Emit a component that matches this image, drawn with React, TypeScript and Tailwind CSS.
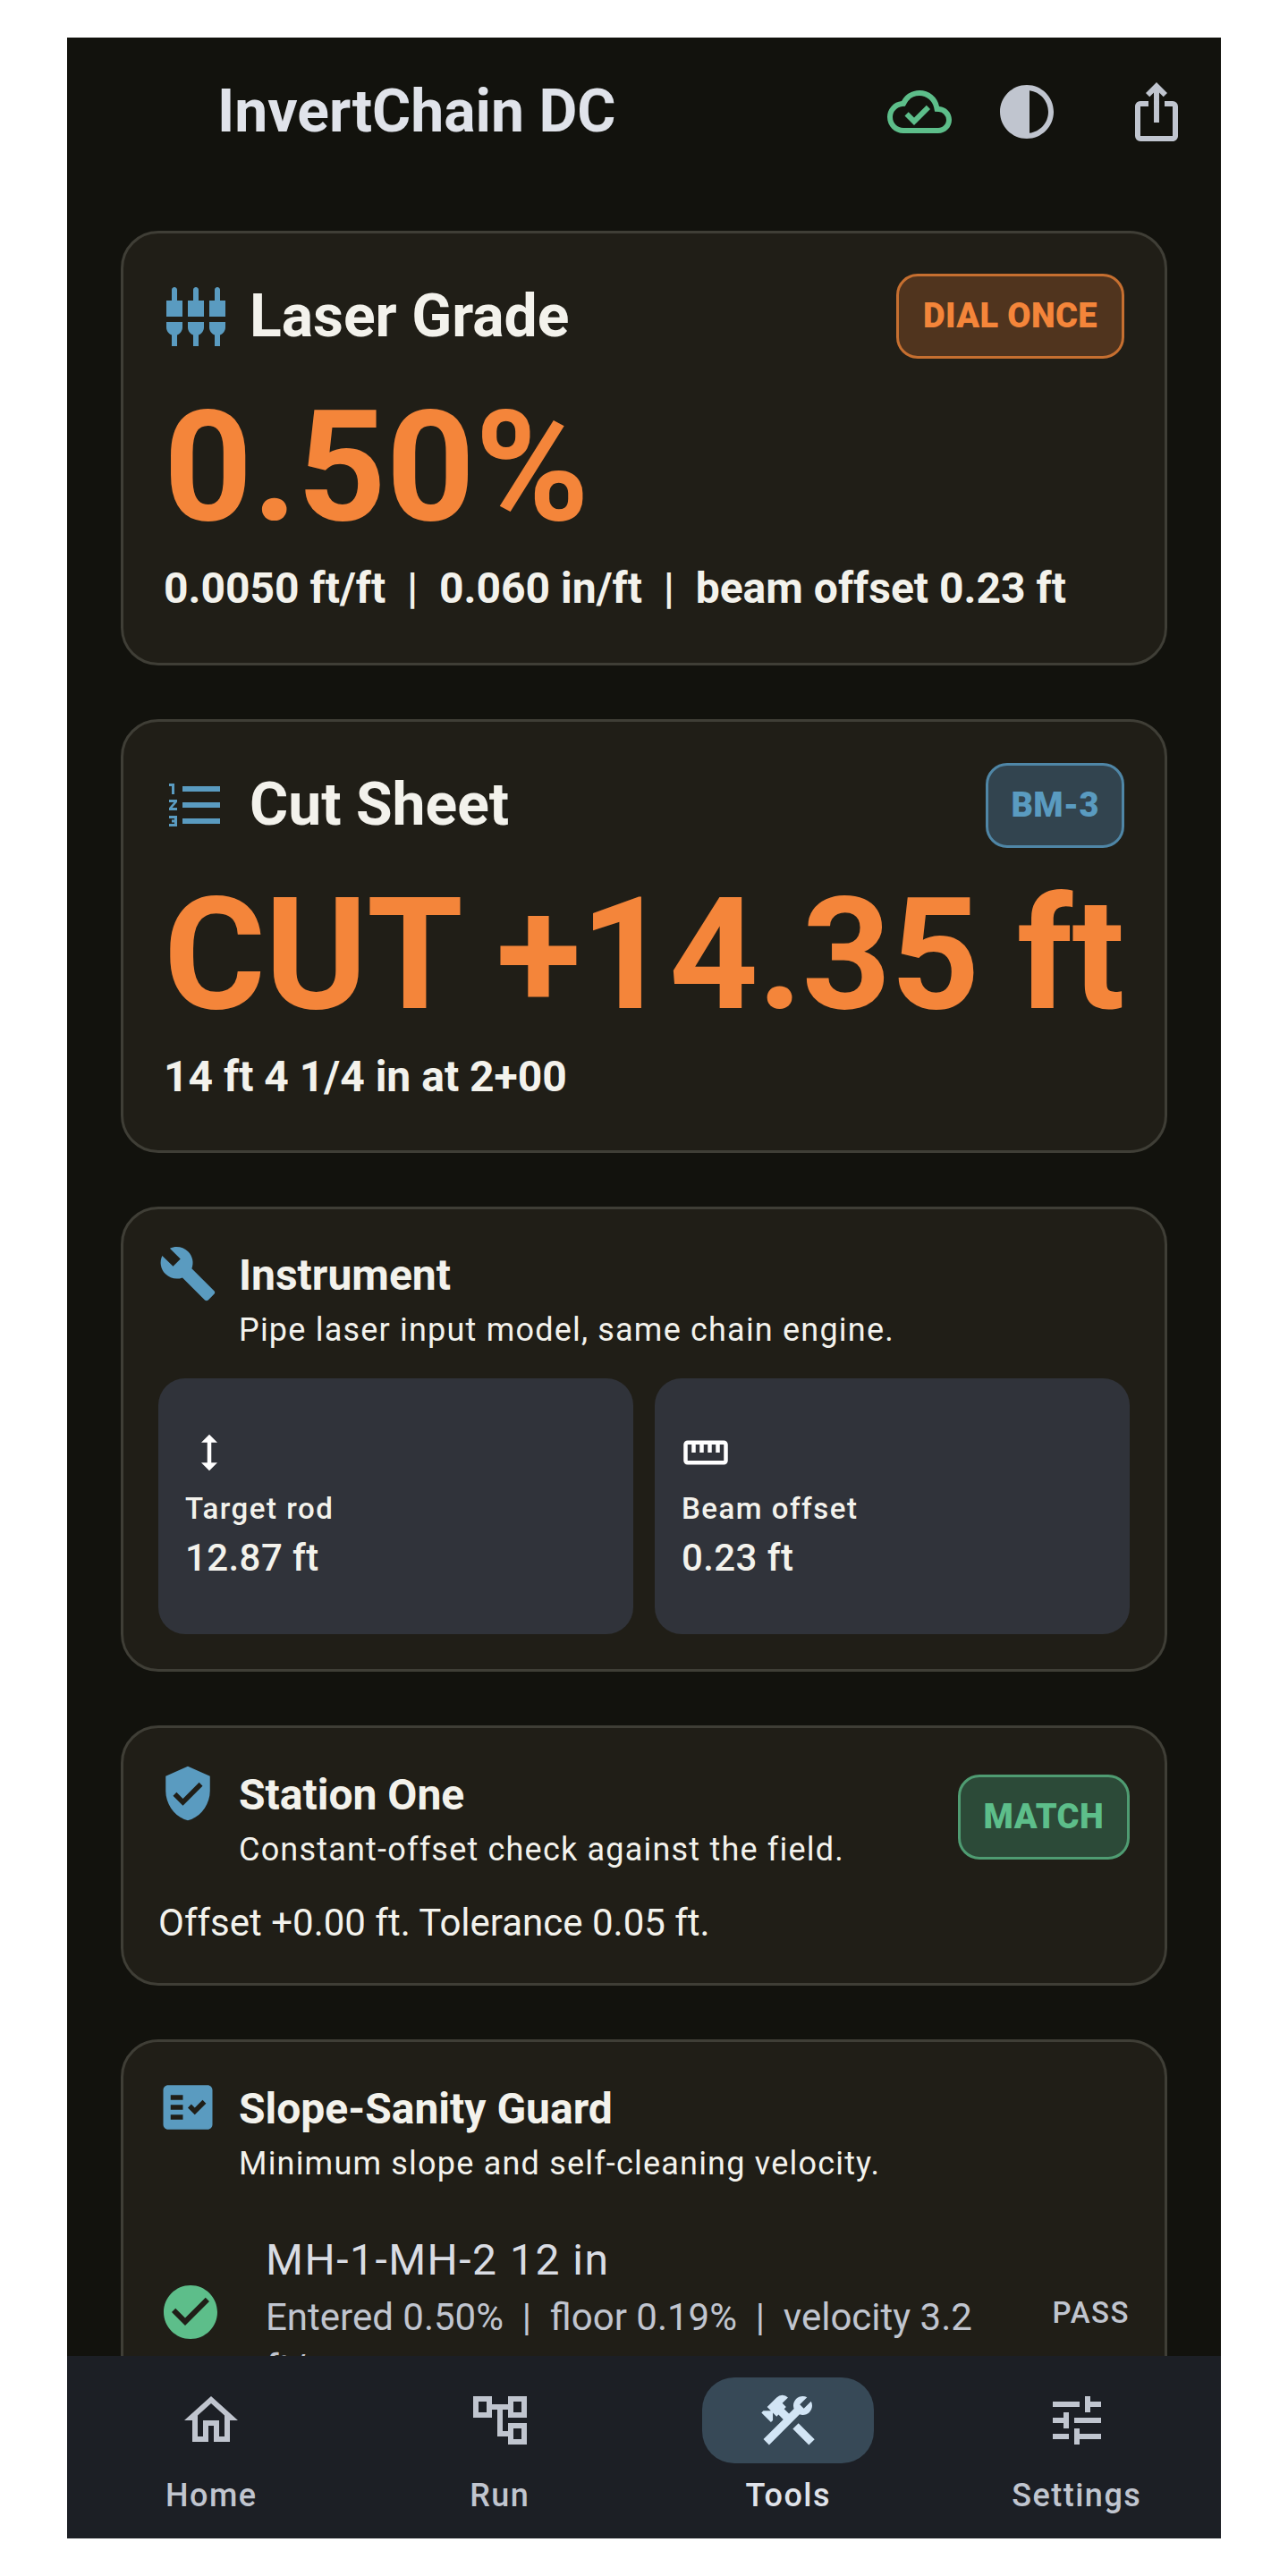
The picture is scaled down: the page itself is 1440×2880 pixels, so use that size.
import React from "react";
import {
  MdOutlineCloudDone, MdContrast, MdIosShare, MdSettingsInputComponent, MdFormatListNumbered,
  MdBuild, MdHeight, MdStraighten, MdVerifiedUser, MdFactCheck, MdCheckCircle, MdOutlineHome,
  MdOutlineAccountTree, MdConstruction, MdTune,
} from "react-icons/md";

const cardClass = "bg-[#201e17] border-[3px] border-[#3f3e36] rounded-[42px] w-full";

function SectionHead({ icon, title, sub }: { icon: React.ReactNode; title: string; sub: string }) {
  return (
    <div className="flex gap-[24px] flex-1">
      <div className="w-[66px] h-[66px] -mt-[5px] shrink-0 text-[#5a9bc0]">{icon}</div>
      <div>
        <div className="text-[48px] leading-[60px] font-bold text-[#f3f2ec]">{title}</div>
        <div className="mt-[7px] text-[36px] leading-[48px] tracking-[1.2px] text-[#f3f2ec]">{sub}</div>
      </div>
    </div>
  );
}

function Tile({ icon, label, value }: { icon: React.ReactNode; label: string; value: string }) {
  return (
    <div className="bg-[#30333a] rounded-[30px] h-[286px] pl-[30px] pt-[56px]">
      <div className="w-[54px] h-[54px] text-white">{icon}</div>
      <div className="mt-[12px] text-[33px] leading-[48px] font-medium tracking-[1.5px] text-[#f3f2ec]">{label}</div>
      <div className="mt-[4px] text-[42px] leading-[54px] font-medium tracking-[0.4px] text-[#f3f2ec]">{value}</div>
    </div>
  );
}

function NavItem({ icon, label, active }: { icon: React.ReactNode; label: string; active?: boolean }) {
  return (
    <div className="flex flex-col items-center pt-[24px]">
      <div className={`w-[192px] h-[96px] rounded-[36px] flex items-center justify-center ${active ? "bg-[#374957] text-[#d2e5f5]" : "text-[#c0c5cf]"}`}>
        <div className="w-[72px] h-[72px]">{icon}</div>
      </div>
      <div className={`mt-[12px] text-[36px] leading-[48px] font-medium tracking-[1.5px] ${active ? "text-[#e0e3ea]" : "text-[#c0c5cf]"}`}>{label}</div>
    </div>
  );
}

const badgeClass = "h-[95px] rounded-[24px] border-[3px] flex items-center text-[38px] font-black tracking-[0.4px]";

export default function App() {
  return (
    <div className="bg-white min-h-screen pt-[42px] font-['Roboto',sans-serif]">
      <div className="w-[1290px] h-[2796px] mx-auto bg-[#12120d] flex flex-col overflow-hidden">
        <header className="h-[162px] shrink-0 flex items-center pl-[168px] pr-[36px] pt-[4px]">
          <h1 className="text-[66px] leading-[84px] font-bold text-[#e0e3ea] flex-1">InvertChain DC</h1>
          <MdOutlineCloudDone className="w-[72px] h-[72px] text-[#5dbe8a]" />
          <MdContrast className="w-[72px] h-[72px] text-[#c0c5cf] ml-[48px]" />
          <MdIosShare className="w-[72px] h-[72px] text-[#c0c5cf] ml-[73px]" />
        </header>

        <main className="flex-1 min-h-0 overflow-hidden px-[60px] pt-[54px] flex flex-col gap-[60px]">
          <section className={`${cardClass} px-[45px] pt-[45px] pb-[50px] shrink-0`}>
            <div className="flex items-center justify-between h-[95px]">
              <div className="flex items-center gap-[24px]">
                <MdSettingsInputComponent className="w-[72px] h-[72px] text-[#5a9bc0]" />
                <div className="text-[66px] leading-[84px] font-bold text-[#f3f2ec]">Laser Grade</div>
              </div>
              <div className={`${badgeClass} px-[27px] border-[#c66f30] bg-[#50341e] text-[#f4853a]`}>DIAL ONCE</div>
            </div>
            <div className="mt-[31px] text-[173px] leading-[180px] font-bold text-[#f4853a]">0.50%</div>
            <div className="mt-[13px] text-[48px] leading-[66px] font-bold text-[#f3f2ec] whitespace-pre">0.0050 ft/ft  |  0.060 in/ft  |  beam offset 0.23 ft</div>
          </section>

          <section className={`${cardClass} px-[45px] pt-[45px] pb-[49px] shrink-0`}>
            <div className="flex items-center justify-between h-[96px]">
              <div className="flex items-center gap-[24px]">
                <MdFormatListNumbered className="w-[72px] h-[72px] text-[#5a9bc0]" />
                <div className="text-[66px] leading-[84px] font-bold text-[#f3f2ec]">Cut Sheet</div>
              </div>
              <div className={`${badgeClass} px-[25px] border-[#4f86a6] bg-[#32444f] text-[#5a9bc0]`}>BM-3</div>
            </div>
            <div className="mt-[33px] text-[174px] leading-[174px] font-bold tracking-[-0.8px] text-[#f4853a] whitespace-nowrap">CUT +14.35 ft</div>
            <div className="mt-[16px] text-[48px] leading-[66px] font-bold text-[#f3f2ec]">14 ft 4 1/4 in at 2+00</div>
          </section>

          <section className={`${cardClass} px-[39px] pt-[44px] pb-[39px] shrink-0`}>
            <SectionHead icon={<MdBuild className="w-full h-full" />} title="Instrument" sub="Pipe laser input model, same chain engine." />
            <div className="mt-[30px] grid grid-cols-2 gap-[24px]">
              <Tile icon={<MdHeight className="w-full h-full" />} label="Target rod" value="12.87 ft" />
              <Tile icon={<MdStraighten className="w-full h-full" />} label="Beam offset" value="0.23 ft" />
            </div>
          </section>

          <section className={`${cardClass} px-[39px] pt-[45px] pb-[39px] shrink-0`}>
            <div className="flex items-start">
              <SectionHead icon={<MdVerifiedUser className="w-full h-full" />} title="Station One" sub="Constant-offset check against the field." />
              <div className={`${badgeClass} px-[26px] mt-[7px] border-[#4f9c72] bg-[#2c4a38] text-[#5dbe8a]`}>MATCH</div>
            </div>
            <div className="mt-[29px] text-[42px] leading-[57px] text-[#f3f2ec]">Offset +0.00 ft. Tolerance 0.05 ft.</div>
          </section>

          <section className={`${cardClass} px-[39px] pt-[45px] shrink-0`}>
            <SectionHead icon={<MdFactCheck className="w-full h-full" />} title="Slope-Sanity Guard" sub="Minimum slope and self-cleaning velocity." />
            <div className="mt-[51px] flex items-center">
              <MdCheckCircle className="w-[72px] h-[72px] text-[#5dbe8a] shrink-0 -mt-[1px]" />
              <div className="ml-[48px] w-[853px]">
                <div className="text-[48px] leading-[66px] tracking-[1.5px] text-[#d9dce3]">MH-1-MH-2 12 in</div>
                <div className="mt-[2px] text-[42px] leading-[57px] text-[#c0c5cf] whitespace-pre-wrap">Entered 0.50%  |  floor 0.19%  |  velocity 3.2 ft/s</div>
              </div>
              <div className="ml-auto mt-[1px] text-[33px] leading-[48px] font-medium tracking-[1.5px] text-[#c0c5cf]">PASS</div>
            </div>
          </section>
        </main>

        <nav className="h-[204px] shrink-0 bg-[#1c1f25] grid grid-cols-4">
          <NavItem icon={<MdOutlineHome className="w-full h-full" />} label="Home" />
          <NavItem icon={<MdOutlineAccountTree className="w-full h-full" />} label="Run" />
          <NavItem icon={<MdConstruction className="w-full h-full" />} label="Tools" active />
          <NavItem icon={<MdTune className="w-full h-full" />} label="Settings" />
        </nav>
      </div>
    </div>
  );
}
